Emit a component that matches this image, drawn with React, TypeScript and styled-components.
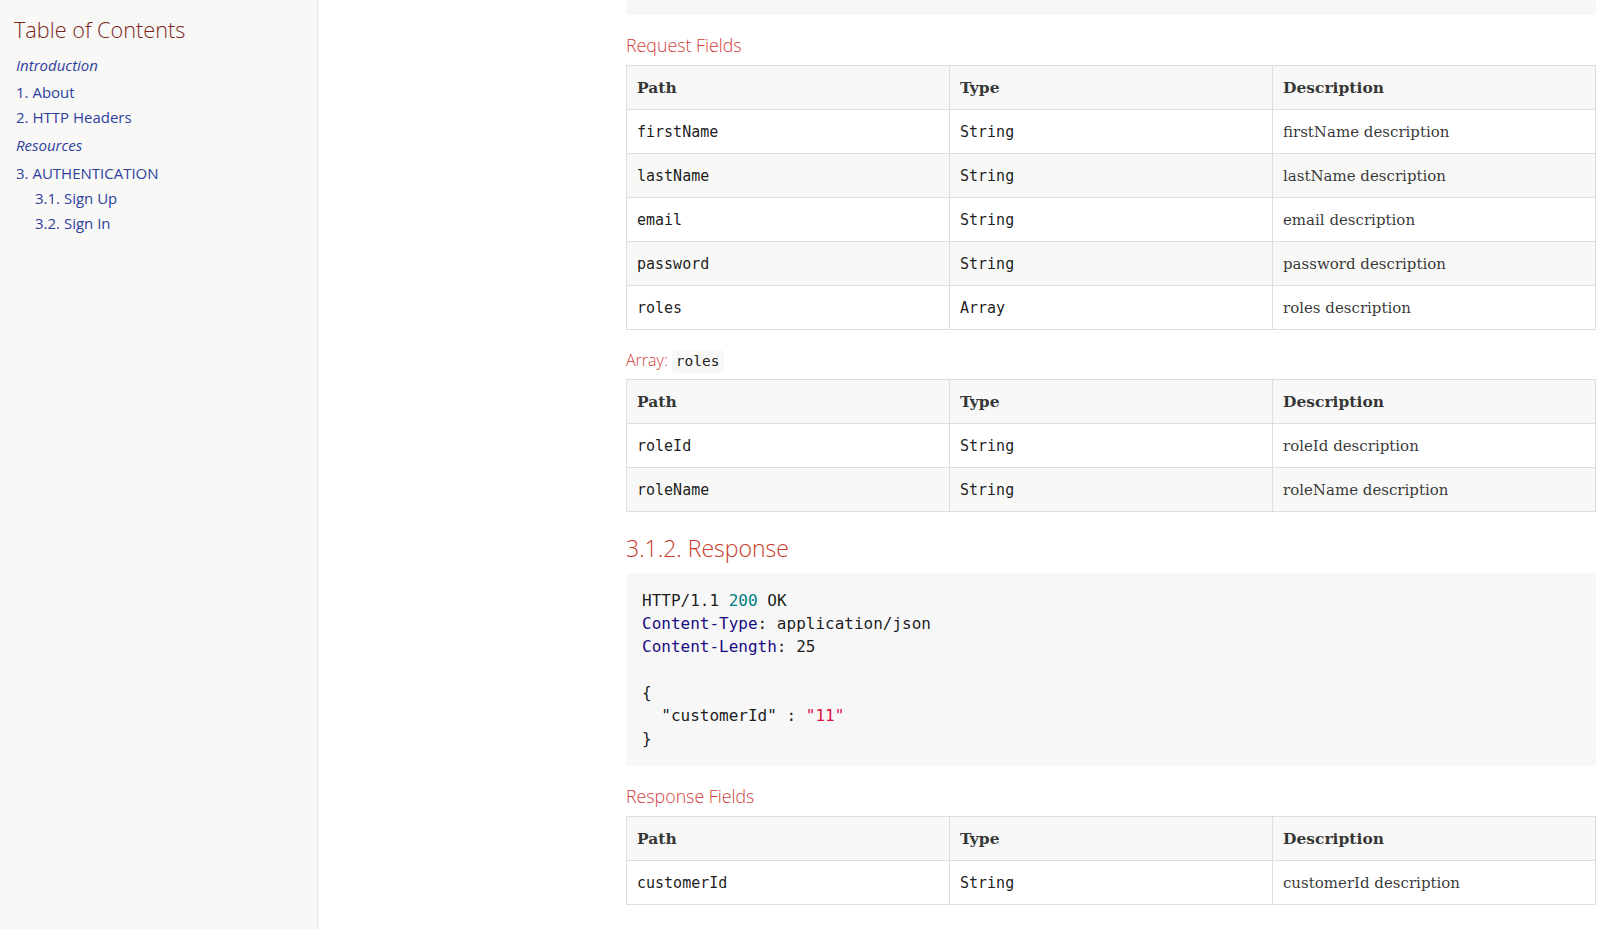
import styled, { createGlobalStyle } from 'styled-components'

interface IField {
  path: string
  type: string
  description: string
}

const requestFields: IField[] = [
  { path: 'firstName', type: 'String', description: 'firstName description' },
  { path: 'lastName', type: 'String', description: 'lastName description' },
  { path: 'email', type: 'String', description: 'email description' },
  { path: 'password', type: 'String', description: 'password description' },
  { path: 'roles', type: 'Array', description: 'roles description' },
]

const roleFields: IField[] = [
  { path: 'roleId', type: 'String', description: 'roleId description' },
  { path: 'roleName', type: 'String', description: 'roleName description' },
]

const responseFields: IField[] = [
  { path: 'customerId', type: 'String', description: 'customerId description' },
]

function FieldsTable({ rows }: { rows: IField[] }) {
  return (
    <Table>
      <colgroup>
        <col style={{ width: '33.3333%' }} />
        <col style={{ width: '33.3333%' }} />
        <col style={{ width: '33.3334%' }} />
      </colgroup>
      <thead>
        <tr>
          <Th>Path</Th>
          <Th>Type</Th>
          <Th>Description</Th>
        </tr>
      </thead>
      <tbody>
        {rows.map((row) => (
          <Row key={row.path}>
            <Td>
              <CellCode>{row.path}</CellCode>
            </Td>
            <Td>
              <CellCode>{row.type}</CellCode>
            </Td>
            <Td>{row.description}</Td>
          </Row>
        ))}
      </tbody>
    </Table>
  )
}

function App() {
  return (
    <>
      <GlobalStyle />
      <Page>
        <Sidebar>
          <TocTitle>Table of Contents</TocTitle>
          <PartList>
            <PartItem>
              <PartLink href="#introduction">Introduction</PartLink>
              <SectList>
                <SectItem>
                  <TocLink href="#about">1. About</TocLink>
                </SectItem>
                <SectItem>
                  <TocLink href="#headers">2. HTTP Headers</TocLink>
                </SectItem>
              </SectList>
            </PartItem>
            <PartItem>
              <PartLink href="#resources">Resources</PartLink>
              <SectList>
                <SectItem>
                  <TocLink href="#authentication">3. AUTHENTICATION</TocLink>
                  <SubList>
                    <SectItem>
                      <TocLink href="#sign-up">3.1. Sign Up</TocLink>
                    </SectItem>
                    <SectItem>
                      <TocLink href="#sign-in">3.2. Sign In</TocLink>
                    </SectItem>
                  </SubList>
                </SectItem>
              </SectList>
            </PartItem>
          </PartList>
        </Sidebar>

        <Main>
          <TopListing />

          <BlockTitle>Request Fields</BlockTitle>
          <FieldsTable rows={requestFields} />

          <ArrayTitle>
            Array: <InlineCode>roles</InlineCode>
          </ArrayTitle>
          <FieldsTable rows={roleFields} />

          <SectionHeading>3.1.2. Response</SectionHeading>
          <Listing>
            <code>
              {'HTTP/1.1 '}
              <Num>200</Num>
              {' OK\n'}
              <Attr>Content-Type</Attr>
              {': application/json\n'}
              <Attr>Content-Length</Attr>
              {': 25\n\n{\n  "customerId" : '}
              <Str>"11"</Str>
              {'\n}'}
            </code>
          </Listing>

          <BlockTitle>Response Fields</BlockTitle>
          <FieldsTable rows={responseFields} />
        </Main>
      </Page>
    </>
  )
}

const GlobalStyle = createGlobalStyle`
  html, body {
    margin: 0;
    padding: 0;
    background: #fff;
  }

  body {
    font-family: "DejaVu Serif", serif;
    color: rgba(0, 0, 0, 0.8);
    overflow: hidden;
  }

  * {
    box-sizing: border-box;
  }
`

const Page = styled.div`
  display: grid;
  grid-template-columns: 318px 1fr;
  min-height: 100vh;
`

const Sidebar = styled.nav`
  height: 100vh;
  background: #f8f8f7;
  border-right: 1px solid #e7e7e9;
  padding: 18px 14px;
  font-family: 'Open Sans', 'DejaVu Sans', sans-serif;
`

const TocTitle = styled.div`
  font-size: 21.7px;
  font-weight: 300;
  line-height: 24px;
  color: #7a2518;
  margin-bottom: 13px;
`

const PartList = styled.ul`
  list-style: none;
  margin: 0;
  padding: 0 0 0 2px;
`

const PartItem = styled.li`
  font-size: 15px;
  line-height: 20px;

  & + & {
    margin-top: 8px;
  }
`

const TocLink = styled.a`
  font-size: 15px;
  color: #2e3f9f;
  text-decoration: none;
`

const PartLink = styled(TocLink)`
  font-style: italic;
`

const SectList = styled.ul`
  list-style: none;
  margin: 0;
  padding: 2px 0 0;

  ${PartItem} + ${PartItem} > & {
    padding-top: 3px;
  }
`

const SubList = styled.ul`
  list-style: none;
  margin: 0;
  padding: 0 0 0 19px;
`

const SectItem = styled.li`
  line-height: 20px;
  margin-top: 5px;
`

const Main = styled.main`
  padding: 0 25px 0 308px;
`

const TopListing = styled.div`
  height: 15px;
  background: #f7f7f8;
  border-radius: 0 0 4px 4px;
`

const BlockTitle = styled.h5`
  font-family: 'Open Sans', 'DejaVu Sans', sans-serif;
  font-weight: 300;
  font-size: 17.8px;
  line-height: 22px;
  color: #d2403a;
  margin: 19px 0 9px;
`

const ArrayTitle = styled.div`
  font-family: 'Open Sans', 'DejaVu Sans', sans-serif;
  font-weight: 300;
  font-size: 16px;
  line-height: 23px;
  color: #d2403a;
  margin: 19px 0 6px;
`

const InlineCode = styled.code`
  display: inline-block;
  font-family: 'DejaVu Sans Mono', monospace;
  font-size: 14.5px;
  line-height: 23px;
  padding: 0 4px;
  background: #f7f7f8;
  border-radius: 4px;
  color: rgba(0, 0, 0, 0.9);
`

const SectionHeading = styled.h4`
  font-family: 'Open Sans', 'DejaVu Sans', sans-serif;
  font-weight: 300;
  font-size: 23px;
  line-height: 28px;
  color: #c8392a;
  margin: 22px 0 11px;
`

const Table = styled.table`
  width: 100%;
  table-layout: fixed;
  border-collapse: collapse;
  border: 1px solid #dedede;
  background: #fff;
`

const Row = styled.tr`
  &:nth-of-type(even) {
    background: #f8f8f7;
  }
`

const Th = styled.th`
  height: 44px;
  padding: 0 10px;
  text-align: left;
  font-size: 15.5px;
  font-weight: bold;
  color: rgba(0, 0, 0, 0.8);
  background: #f7f8f7;
  border: 1px solid #dedede;
`

const Td = styled.td`
  height: 44px;
  padding: 0 10px;
  font-size: 15px;
  color: rgba(0, 0, 0, 0.8);
  border: 1px solid #dedede;
`

const CellCode = styled.code`
  font-family: 'DejaVu Sans Mono', monospace;
  font-size: 15px;
  color: rgba(0, 0, 0, 0.9);
`

const Listing = styled.pre`
  margin: 0;
  padding: 16px;
  background: #f7f7f8;
  border-radius: 4px;
  font-family: 'DejaVu Sans Mono', monospace;
  font-size: 16px;
  line-height: 23px;
  color: rgba(0, 0, 0, 0.9);
  white-space: pre;
`

const Attr = styled.span`
  color: #1a0a80;
`

const Num = styled.span`
  color: #008080;
`

const Str = styled.span`
  color: #dd1144;
`

export default App
